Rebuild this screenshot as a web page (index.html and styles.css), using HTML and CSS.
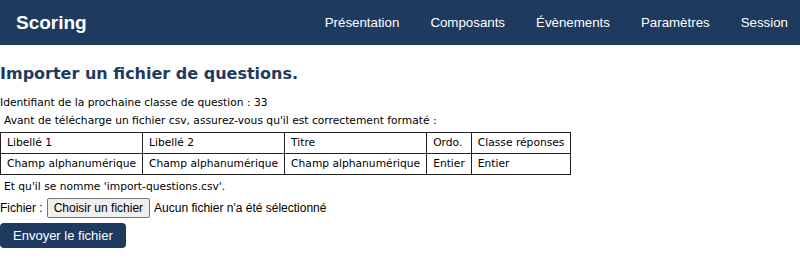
FILE: index.html
```html
<!DOCTYPE html>
<html>
<head>
    <meta charset="UTF-8">
    <title>Scoring - Import</title>
    <link rel="stylesheet" href="styles.css">
</head>
<body>
    <header class="topbar">
        <div class="brand">Scoring</div>
        <nav class="menu">
            <a href="#">Présentation</a>
            <a href="#">Composants</a>
            <a href="#">Évènements</a>
            <a href="#">Paramètres</a>
            <a href="#">Session</a>
        </nav>
    </header>

    <main class="content">
        <h1 class="page-title">Importer un fichier de questions.</h1>
        <p class="line">Identifiant de la prochaine classe de question : 33</p>
        <p class="line indent">Avant de télécharge un fichier csv, assurez-vous qu'il est correctement formaté :</p>

        <table class="format-table">
            <tr>
                <td>Libellé 1</td>
                <td>Libellé 2</td>
                <td>Titre</td>
                <td>Ordo.</td>
                <td>Classe réponses</td>
            </tr>
            <tr>
                <td>Champ alphanumérique</td>
                <td>Champ alphanumérique</td>
                <td>Champ alphanumérique</td>
                <td>Entier</td>
                <td>Entier</td>
            </tr>
        </table>

        <p class="line indent">Et qu'il se nomme 'import-questions.csv'.</p>

        <form class="upload-form">
            <div class="file-row">
                <label>Fichier :</label>
                <span class="file-button">Choisir un fichier</span>
                <span class="file-none">Aucun fichier n'a été sélectionné</span>
            </div>
            <button type="button" class="send-button">Envoyer le fichier</button>
        </form>
    </main>
</body>
</html>
```

FILE: styles.css
```css
body {
    margin: 0;
    padding: 0;
    font-family: 'DejaVu Sans', Verdana, sans-serif;
    color: #000000;
    background: #ffffff;
}

.topbar {
    height: 45px;
    background: #1e3a5f;
    display: flex;
    align-items: center;
    justify-content: space-between;
    padding: 0 12px 0 16px;
    color: #ffffff;
    font-family: 'Liberation Sans', Arial, sans-serif;
}

.brand {
    font-size: 19px;
    font-weight: bold;
}

.menu {
    display: flex;
    gap: 31px;
}

.menu a {
    color: #ffffff;
    text-decoration: none;
    font-size: 13.3px;
}

.page-title {
    margin: 19px 0 12px 0;
    font-size: 16px;
    line-height: 20px;
    font-weight: bold;
    color: #1e3a5f;
}

.line {
    margin: 0 0 4px 0;
    font-size: 10.7px;
    line-height: 14px;
}

.indent {
    padding-left: 4px;
}

.format-table {
    border-collapse: collapse;
    margin: 3px 0 5px 0;
    font-size: 10.7px;
    border: 1px solid #555555;
}

.format-table td {
    border: 1px solid #222222;
    padding: 3px 6px;
    line-height: 14px;
    white-space: nowrap;
}

.upload-form {
    font-family: 'Liberation Sans', Arial, sans-serif;
    font-size: 12px;
}

.file-row {
    display: flex;
    align-items: center;
    gap: 4px;
    margin-top: 4px;
}

.file-button {
    border: 1px solid #767676;
    background: #efefef;
    border-radius: 2px;
    padding: 2px 6px;
}

.send-button {
    margin-top: 5px;
    background: #1e3a5f;
    color: #ffffff;
    border: none;
    border-radius: 4px;
    padding: 5px 13px;
    font-family: 'Liberation Sans', Arial, sans-serif;
    font-size: 13px;
}
```
